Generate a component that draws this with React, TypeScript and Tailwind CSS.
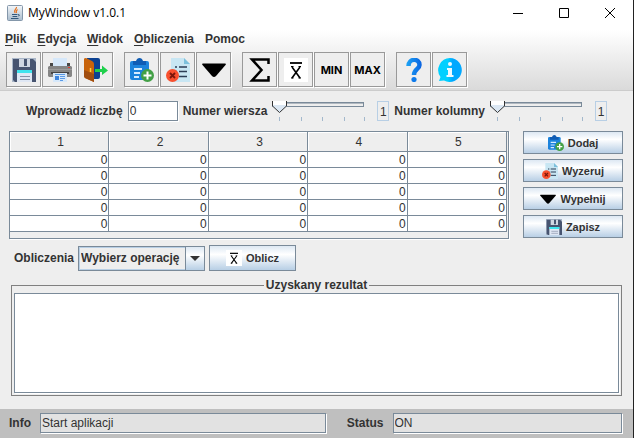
import { useState } from "react";
import type { ReactNode } from "react";

type IconProps = { className?: string };

function SaveIcon({ className = "size-6" }: IconProps) {
  return (
    <svg viewBox="0 0 24 24" className={className} aria-hidden="true">
      <path d="M0 0H24V24H0Z" fill="#a9b6c8" />
      <path d="M1 1H21L24 4V24H3L1 22Z" fill="#475470" />
      <path d="M7 1H18V9H7Z" fill="#cfd6e2" />
      <path d="M12 1H15V8H12Z" fill="#475470" />
      <path d="M5 12H20V24H5Z" fill="#dfe7f4" />
      <path d="M5 12H20V15H5Z" fill="#3fe4ee" />
      <path d="M8 18.500H18M8 21.500H18" stroke="#8793a8" />
    </svg>
  );
}

function PrintIcon({ className = "size-6" }: IconProps) {
  return (
    <svg viewBox="0 0 24 24" className={className} aria-hidden="true">
      <path d="M2 5H22V9H2Z" fill="#484848" />
      <path d="M5 0H19V8H5Z" fill="#d6e8fa" />
      <path d="M1 8H23L24 9V18L23 19H1L0 18V9Z" fill="#858585" />
      <path d="M0 11H24V12H0Z" fill="#9c9c9c" />
      <path d="M20 9H22V10H20Z" fill="#e8382c" />
      <path d="M3 14H21V16H3Z" fill="#444" />
      <path d="M5 15H19V24H5Z" fill="#d6e8fa" />
      <path d="M7 18H11V22H7Z" fill="#3b82dc" />
      <path d="M7 16.500H17M12 18.500H17M12 20.500H17M12 22.500H15" stroke="#5a9ae6" />
    </svg>
  );
}

function ExitIcon({ className = "size-6" }: IconProps) {
  return (
    <svg viewBox="0 0 24 24" className={className} aria-hidden="true">
      <path d="M3 0H14Q16 0 16 2V19Q16 21 14 21H3Z" fill="#0c4191" />
      <path d="M0 1Q0 0 2 0L8 3Q10 4 10 6V24L1 20Q0 19 0 18Z" fill="#c8640c" />
      <path d="M0 12L10 16V24L1 20Q0 19 0 18Z" fill="#a14e10" />
      <path d="M6.500 10V14" stroke="#ffd23c" strokeWidth="1.500" />
      <path d="M11 11H18V7.500L24 12.500L18 17V14H11Z" fill="#1fd04c" />
    </svg>
  );
}

function AddIcon({ className = "size-6" }: IconProps) {
  return (
    <svg viewBox="0 0 24 24" className={className} aria-hidden="true">
      <path d="M2 3H17Q19 3 19 5V22H2Q0 22 0 20V5Q0 3 2 3Z" fill="#1c83dc" />
      <path d="M3 7V3H6Q7 0 9.500 0Q12 0 13 3H16V7Z" fill="#0f5cb4" />
      <path d="M4 11H12M4 15H10M4 19H9" stroke="#d7ecff" strokeWidth="1.800" />
      <circle cx="17.500" cy="17.500" r="6.500" fill="#43a047" />
      <path d="M17.500 13.500V21.500M13.500 17.500H21.500" stroke="#fff" strokeWidth="2" />
    </svg>
  );
}

function ResetIcon({ className = "size-6" }: IconProps) {
  return (
    <svg viewBox="0 0 24 24" className={className} aria-hidden="true">
      <path d="M5 0H18L24 6V24H5Z" fill="#c8e6f3" />
      <path d="M18 0L24 6H18Z" fill="#7cc0dc" />
      <path d="M13 9H21M9 13.500H11M13 13.500H21M13 18.500H21M9 9H11" stroke="#2b3d55" strokeWidth="1.500" />
      <circle cx="6.500" cy="17.500" r="6.500" fill="#f8502e" />
      <path d="M4 15L9 20M9 15L4 20" stroke="#7c160a" strokeWidth="1.800" />
    </svg>
  );
}

function FillIcon({ className = "size-6" }: IconProps) {
  return (
    <svg viewBox="0 0 24 24" className={className} aria-hidden="true">
      <path d="M1 5.500H23Q24.500 5.500 23.500 7L14 18Q12 20 10 18L.5 7Q-.5 5.500 1 5.500Z" fill="#000" />
    </svg>
  );
}

function SumIcon({ className = "size-6" }: IconProps) {
  return (
    <svg viewBox="0 0 24 24" className={className} aria-hidden="true">
      <path d="M20.500 6V1.500H4L13.500 12L4 22.500H20.500V18" fill="none" stroke="#000" strokeWidth="2.500" />
    </svg>
  );
}

function MeanIcon({ className = "size-6" }: IconProps) {
  return (
    <svg viewBox="0 0 24 24" className={className} aria-hidden="true">
      <path d="M0 0H24V24H0Z" fill="#fff" />
      <path d="M6 5H18" stroke="#000" strokeWidth="1.800" />
      <path d="M8 9L16 20M16 9L8 20" stroke="#000" strokeWidth="1.600" />
      <path d="M7 8.500H9.500M14.500 8.500H17M7 20H9.500M14.500 20H17" stroke="#000" />
    </svg>
  );
}

function HelpIcon({ className = "size-6" }: IconProps) {
  return (
    <svg viewBox="0 0 24 24" className={className} aria-hidden="true">
      <defs>
        <linearGradient id="help-fill" gradientUnits="userSpaceOnUse" x1="4" y1="0" x2="20" y2="0">
          <stop offset="0" stopColor="#1ea5f5" />
          <stop offset="1" stopColor="#0a62e0" />
        </linearGradient>
      </defs>
      <path d="M6.500 8C6.500 0 17.500 0 17.500 7C17.500 11 12 11 12 17" fill="none" stroke="url(#help-fill)" strokeWidth="4.500" />
      <circle cx="12" cy="21.500" r="2.600" fill="#0f7aea" />
    </svg>
  );
}

function InfoIcon({ className = "size-6" }: IconProps) {
  return (
    <svg viewBox="0 0 24 24" className={className} aria-hidden="true">
      <defs>
        <linearGradient id="info-fill" x1="0" y1="0" x2="1" y2="0">
          <stop offset=".4" stopColor="#00d0ff" />
          <stop offset=".6" stopColor="#00a8ff" />
        </linearGradient>
      </defs>
      <path d="M12 0A12 12 0 1 1 6 22.500L1 23L2.500 19A12 12 0 0 1 12 0Z" fill="url(#info-fill)" />
      <circle cx="12" cy="6" r="2" fill="#eefaff" />
      <path d="M9 10H14V17H15.500V19H8.500V17H10V12H9Z" fill="#eefaff" />
    </svg>
  );
}

function JavaIcon() {
  return (
    <svg viewBox="0 0 16 16" className="size-4" aria-hidden="true">
      <defs>
        <linearGradient id="java-fill" x1="0" y1="0" x2="0" y2="1">
          <stop offset="0" stopColor="#f4f7fa" />
          <stop offset="1" stopColor="#a9bccd" />
        </linearGradient>
      </defs>
      <rect x=".5" y=".5" width="15" height="15" rx="1" fill="url(#java-fill)" stroke="#8497aa" />
      <path d="M9.500 2C10 4 6 5 8 8M10.500 4.500C8.500 6 9 6.500 9.500 8" fill="none" stroke="#e5701c" strokeWidth="1.200" />
      <path d="M5 9.500H10.500M5.500 11.500H10M4 13.500H11.500M11 9.500Q14 9.500 11 11.500" fill="none" stroke="#31587c" />
    </svg>
  );
}

function ToolButton({ label, children }: { label: string; children: ReactNode }) {
  return (
    <button
      type="button"
      aria-label={label}
      className="flex size-[35px] items-center justify-center border border-[#999] bg-[#eee] font-['Inter',sans-serif] text-[11px] font-bold text-black shadow-[1px_1px_0_#fff]"
    >
      {children}
    </button>
  );
}

function ActionButton({ className, icon, children }: { className: string; icon: ReactNode; children: ReactNode }) {
  return (
    <button
      type="button"
      className={`flex items-center justify-center gap-1 border border-[#7a8a99] bg-linear-to-b from-[#dde8f3] via-white via-35% to-[#b8cfe5] text-[11px] font-bold ${className}`}
    >
      {icon}
      {children}
    </button>
  );
}

function TickSlider({ id, label }: { id: string; label: string }) {
  const [value, setValue] = useState(1);
  const thumb = 7.5 + (value - 1) * 21;
  return (
    <>
      <label htmlFor={id} className="font-bold">{label}</label>
      <div className="relative h-5 w-[100px]">
        <svg viewBox="0 0 100 20" className="h-5 w-[100px]" aria-hidden="true">
          <rect x=".5" y="1.500" width="91" height="4" fill="#eee" stroke="#7a8a99" />
          <path d="M1 2.500H91" stroke="#b0b8c0" />
          <path d="M7.500 16V20M29.500 16V20M50.500 16V20M72.500 16V20M92.500 16V20" stroke="#a3b8cc" />
          <path
            d="M-7 .5H7V5L0 11.500L-7 5Z"
            transform={`translate(${thumb} 0)`}
            fill="#dbe7f3"
          />
          <path d="M-7 0H7V4H-7Z" transform={`translate(${thumb} 0)`} fill="#fff" />
          <path
            d="M-7 0V5L0 11.500L7 5V0"
            transform={`translate(${thumb} 0)`}
            fill="none"
            stroke="#333"
          />
        </svg>
        <input
          id={id}
          type="range"
          min={1}
          max={5}
          value={value}
          onChange={(e) => setValue(Number(e.target.value))}
          className="absolute inset-0 w-full cursor-pointer opacity-0"
        />
      </div>
      <output htmlFor={id} className="h-5 w-3 border border-[#b8cfe5] text-center leading-5">{value}</output>
    </>
  );
}

const field = "h-5 border border-[#7a8a99] px-px text-[12px] shadow-[1px_1px_0_#fff] outline-none";
const columns = [1, 2, 3, 4, 5];
const rows = [0, 1, 2, 3, 4];
const menus = ["Plik", "Edycja", "Widok", "Obliczenia"];

export default function App() {
  return (
    <div className="flex min-h-screen flex-col border-r border-[#222] bg-[#eee] font-['Liberation_Sans',Arial,sans-serif] text-[12px] leading-4 text-[#333]">
      <header className="flex h-[25px] items-center bg-white pl-[7px] text-black">
        <JavaIcon />
        <h1 className="ml-[5px] flex-1 font-['Open_Sans',sans-serif] text-[12px]">MyWindow v1.0.1</h1>
        <button type="button" aria-label="Minimize" className="flex h-6 w-[46px] items-center justify-center">
          <svg viewBox="0 0 10 10" className="size-[10px]"><path d="M0 5.500H10" stroke="#000" /></svg>
        </button>
        <button type="button" aria-label="Maximize" className="flex h-6 w-[46px] items-center justify-center">
          <svg viewBox="0 0 10 10" className="size-[10px]"><path d="M.5 .5H9.500V9.500H.5Z" fill="none" stroke="#000" /></svg>
        </button>
        <button type="button" aria-label="Close" className="flex h-6 w-[46px] items-center justify-center">
          <svg viewBox="0 0 10 10" className="size-[10px]"><path d="M0 0L10 10M10 0L0 10" stroke="#000" /></svg>
        </button>
      </header>

      <div className="border-b border-[#ccc] bg-linear-to-b from-white from-8% to-[#dadada]">
        <nav className="flex h-[27px] items-center gap-[11px] pl-[5px] font-bold">
          {menus.map((m) => (
            <button key={m} type="button">
              <span className="underline underline-offset-2">{m[0]}</span>
              {m.slice(1)}
            </button>
          ))}
          <button type="button">Pomoc</button>
        </nav>
        <div className="flex gap-[11px] pb-[3px] pl-[6px]">
          <div className="flex gap-px">
            <ToolButton label="Zapisz plik"><SaveIcon /></ToolButton>
            <ToolButton label="Drukuj"><PrintIcon /></ToolButton>
            <ToolButton label="Wyjście"><ExitIcon /></ToolButton>
          </div>
          <div className="flex gap-px">
            <ToolButton label="Dodaj liczbę"><AddIcon /></ToolButton>
            <ToolButton label="Wyzeruj tabelę"><ResetIcon /></ToolButton>
            <ToolButton label="Wypełnij tabelę"><FillIcon /></ToolButton>
          </div>
          <div className="flex gap-px">
            <ToolButton label="Suma"><SumIcon /></ToolButton>
            <ToolButton label="Średnia"><MeanIcon /></ToolButton>
            <ToolButton label="MIN">MIN</ToolButton>
            <ToolButton label="MAX">MAX</ToolButton>
          </div>
          <div className="flex gap-px">
            <ToolButton label="Pomoc"><HelpIcon /></ToolButton>
            <ToolButton label="Informacje"><InfoIcon /></ToolButton>
          </div>
        </div>
      </div>

      <main className="flex flex-1 flex-col">
        <div className="flex items-center justify-center gap-[5px] py-[10px]">
          <label htmlFor="number" className="font-bold">Wprowadź liczbę</label>
          <input id="number" defaultValue="0" className={`${field} w-[50px] bg-white`} />
          <TickSlider id="row" label="Numer wiersza" />
          <TickSlider id="column" label="Numer kolumny" />
        </div>

        <div className="flex items-start gap-[14px] pr-[10px] pl-[9px]">
          <div className="flex-1 border border-[#7a8a99] pr-px pb-[6px] shadow-[1px_1px_0_#fff]">
            <table className="w-full table-fixed border-separate border-spacing-0">
              <thead>
                <tr>
                  {columns.map((c) => (
                    <th key={c} className="h-5 border-r border-b border-[#7a8a99] p-0 pl-[3px] text-center font-normal shadow-[inset_1px_1px_0_#fff]">{c}</th>
                  ))}
                </tr>
              </thead>
              <tbody>
                {rows.map((r) => (
                  <tr key={r}>
                    {columns.map((c) => (
                      <td key={c} className="h-4 border-r border-b border-[#7a8a99] bg-white p-0 pt-px pr-px text-right leading-[14px]">0</td>
                    ))}
                  </tr>
                ))}
              </tbody>
            </table>
          </div>
          <div className="flex w-[100px] flex-col gap-[5px]">
            <ActionButton className="h-[23px]" icon={<AddIcon className="size-4" />}>Dodaj</ActionButton>
            <ActionButton className="h-[23px]" icon={<ResetIcon className="size-4" />}>Wyzeruj</ActionButton>
            <ActionButton className="h-[23px]" icon={<FillIcon className="size-4" />}>Wypełnij</ActionButton>
            <ActionButton className="h-[23px]" icon={<SaveIcon className="size-4" />}>Zapisz</ActionButton>
          </div>
        </div>

        <div className="flex items-center gap-1 pt-[6px] pl-[14px]">
          <label htmlFor="operation" className="font-bold">Obliczenia</label>
          <div className="relative">
            <select
              id="operation"
              className="h-[25px] w-[127px] appearance-none border border-[#7a8a99] bg-[#eee] pl-[2px] font-bold shadow-[inset_0_0_0_1px_#b8cfe5] outline-none"
            >
              <option>Wybierz operację</option>
              <option>Suma</option>
              <option>Średnia</option>
            </select>
            <span className="pointer-events-none absolute top-px right-px bottom-px flex w-[19px] items-center justify-center border-l border-[#7a8a99] bg-linear-to-b from-[#dde8f3] via-white via-35% to-[#b8cfe5]">
              <svg viewBox="0 0 10 5" className="h-[5px] w-[10px]" aria-hidden="true"><path d="M0 0H10L5 5Z" fill="#333" /></svg>
            </span>
          </div>
          <ActionButton className="h-[26px] w-[87px]" icon={<MeanIcon className="size-4" />}>Oblicz</ActionButton>
        </div>

        <fieldset className="mx-[11px] mt-[6px] mb-3 border border-[#808080] px-[2px] pb-[2px]">
          <legend className="mx-auto px-[2px] font-bold">
            <label htmlFor="result">Uzyskany rezultat</label>
          </legend>
          <textarea
            id="result"
            className="block h-[100px] w-full resize-none border border-[#7a8a99] bg-white p-px shadow-[1px_1px_0_#fff] outline-none"
          />
        </fieldset>
      </main>

      <footer className="flex h-[29px] items-center bg-[#bfbfbf] pr-[11px] pb-px pl-[9px]">
        <label htmlFor="info" className="w-[31px] font-bold">Info</label>
        <input id="info" readOnly value="Start aplikacji" className={`${field} w-0 grow-[5] bg-[#e2e2e2]`} />
        <label htmlFor="status" className="mr-[9px] ml-[21px] font-bold">Status</label>
        <input id="status" readOnly value="ON" className={`${field} w-0 grow-[4] bg-[#e2e2e2]`} />
      </footer>
    </div>
  );
}
